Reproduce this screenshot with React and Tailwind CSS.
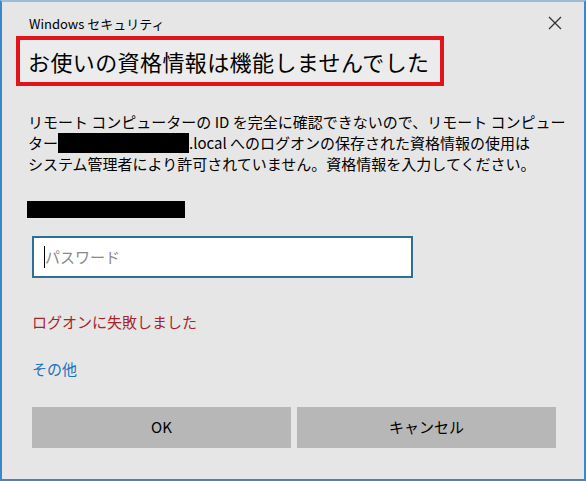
import React from 'react';

const font = { fontFamily: '"Noto Sans CJK JP", "Noto Sans", sans-serif' };

function CloseIcon() {
  return (
    <svg width="14" height="14" viewBox="0 0 14 14" className="text-[#333]">
      <path d="M1 1 L13 13 M13 1 L1 13" stroke="currentColor" strokeWidth="1.3" fill="none" />
    </svg>
  );
}

export default function App() {
  return (
    <div
      className="w-[586px] h-[481px] bg-[#e6e6e6] border-2 border-[#3a87c9] border-t-[#9cbcd8] flex flex-col text-black"
      style={font}
    >
      {/* title bar */}
      <div className="flex items-center justify-between pl-[27px] pr-[22px] pt-[10px] h-[32px]">
        <span className="text-[13px] leading-none">Windows セキュリティ</span>
        <CloseIcon />
      </div>

      {/* heading */}
      <div className="ml-[14px] mt-[2px] w-[428px] h-[50px] border-4 border-[#e3131b] bg-[#ececec] flex items-center pl-[8px]">
        <h1 className="text-[22px] leading-none tracking-[0.4px]">お使いの資格情報は機能しませんでした</h1>
      </div>

      {/* message */}
      <p className="mt-[25px] pl-[26px] text-[15px] leading-[21px] whitespace-nowrap">
        リモート コンピューターの ID を完全に確認できないので、リモート コンピュー
        <br />
        ター
        <span className="inline-block w-[131px] h-[20px] bg-black align-[-4px]" />
        .local へのログオンの保存された資格情報の使用は
        <br />
        システム管理者により許可されていません。資格情報を入力してください。
      </p>

      <div className="mt-[27px] ml-[25px] w-[158px] h-[17px] bg-black" />

      <div className="mt-[18px] ml-[30px] w-[381px] h-[42px] bg-white border-2 border-[#2f6f96] flex items-center pl-[10px]">
        <span className="w-px h-[22px] bg-black" />
        <span className="text-[15px] text-[#8a8a8a]">パスワード</span>
      </div>

      <p className="mt-[33px] ml-[30px] text-[15px] text-[#a4262c]">ログオンに失敗しました</p>

      <p className="mt-[24px] ml-[30px] text-[15px] text-[#1a73c0]">その他</p>

      <div className="mt-[27px] ml-[30px] w-[524px] flex gap-[6px]">
        <button className="flex-1 h-[41px] bg-[#b7b7b7] text-[15px]">OK</button>
        <button className="flex-1 h-[41px] bg-[#b7b7b7] text-[15px]">キャンセル</button>
      </div>
    </div>
  );
}
